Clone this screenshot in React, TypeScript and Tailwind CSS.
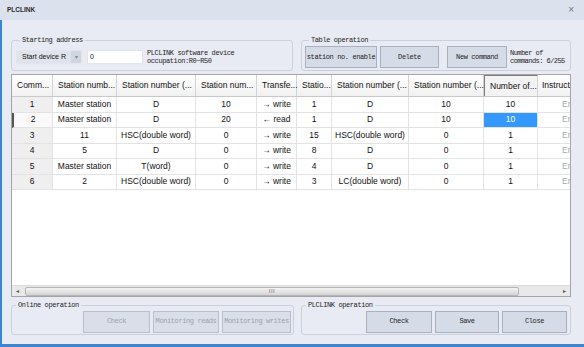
import React from "react";

const mono = { fontFamily: '"Liberation Mono", "DejaVu Sans Mono", monospace' };
const sans = { fontFamily: '"Liberation Sans", Arial, sans-serif' };

type Row = {
  no: string;
  st: string;
  dev: string;
  num: string;
  dir: string;
  st2: string;
  dev2: string;
  num2: string;
  count: string;
};

const rows: Row[] = [
  { no: "1", st: "Master station", dev: "D", num: "10", dir: "→ write", st2: "1", dev2: "D", num2: "10", count: "10" },
  { no: "2", st: "Master station", dev: "D", num: "20", dir: "← read", st2: "1", dev2: "D", num2: "10", count: "10" },
  { no: "3", st: "11", dev: "HSC(double word)", num: "0", dir: "→ write", st2: "15", dev2: "HSC(double word)", num2: "0", count: "1" },
  { no: "4", st: "5", dev: "D", num: "0", dir: "→ write", st2: "8", dev2: "D", num2: "0", count: "1" },
  { no: "5", st: "Master station", dev: "T(word)", num: "0", dir: "→ write", st2: "4", dev2: "D", num2: "0", count: "1" },
  { no: "6", st: "2", dev: "HSC(double word)", num: "0", dir: "→ write", st2: "3", dev2: "LC(double word)", num2: "0", count: "1" },
];

const headers = [
  { t: "Comm...", w: "w-[41px]" },
  { t: "Station numb...", w: "w-[64px]" },
  { t: "Station number (...", w: "w-[79px]" },
  { t: "Station num...", w: "w-[61px]" },
  { t: "Transfe...", w: "w-[40px]" },
  { t: "Statio...", w: "w-[35px]" },
  { t: "Station number (...", w: "w-[77px]" },
  { t: "Station number (...", w: "w-[75px]" },
];

function Btn({ label, w, disabled }: { label: string; w: string; disabled?: boolean }) {
  return (
    <button
      style={mono}
      className={`${w} h-[22px] shrink-0 border text-[7px] tracking-[-0.4px] ${
        disabled
          ? "border-[#b9c0cd] bg-[#d9dee8] text-[#9ca3ad]"
          : "border-[#a9b1c1] bg-[#d5dbe7] text-[#1e1e1e]"
      }`}
    >
      {label}
    </button>
  );
}

function Group({ title, className, children }: { title: string; className: string; children: React.ReactNode }) {
  return (
    <fieldset className={`border border-[#cbd0db] rounded-[3px] ${className}`}>
      <legend
        style={mono}
        className="ml-[4px] px-[2px] text-[7px] leading-[8px] tracking-[-0.4px] text-[#1e1e1e]"
      >
        {title}
      </legend>
      {children}
    </fieldset>
  );
}

function Cell({ w, children, className = "" }: { w: string; children?: React.ReactNode; className?: string }) {
  return (
    <div
      className={`${w} shrink-0 h-full flex items-center justify-center border-r border-b border-[#e3e3e3] ${className}`}
    >
      {children}
    </div>
  );
}

export default function App() {
  return (
    <div className="w-[584px] h-[347px] flex flex-col bg-[#e8ebf3] overflow-hidden" style={sans}>
      {/* title bar */}
      <div className="h-[20px] shrink-0 bg-[#dce2ed] flex items-center justify-between pl-[7px] pr-[10px]">
        <span className="text-[6.5px] font-bold text-[#2a2a2a]">PLCLINK</span>
        <span className="text-[10px] leading-none text-[#777]">×</span>
      </div>

      <div className="flex-1 flex flex-col border-l-2 border-b-[3px] border-[#3d86cf] pl-[9px] pr-[13px] pt-[16px]">
        {/* top groups */}
        <div className="flex gap-[8px]">
          <Group title="Starting address" className="w-[282px] h-[35px] flex items-center pl-[4px]">
            <div className="w-[66px] h-[14px] flex bg-[#dfe3ec] border border-[#e3e6ee]">
              <span className="flex-1 text-[7px] leading-[12px] pl-[5px] text-[#111]">Start device R</span>
              <span className="w-[10px] bg-[#d0d5df] text-[6px] leading-[12px] text-center text-[#888]">▾</span>
            </div>
            <div className="ml-[5px] w-[56px] h-[14px] bg-white border border-[#e1e4ec] text-[7px] leading-[12px] pl-[2px] text-[#111]">
              0
            </div>
            <div style={mono} className="ml-[4px] text-[7px] leading-[8px] tracking-[-0.4px] text-[#1e1e1e] -mt-[1px]">
              PLCLINK software device
              <br />
              occupation:R0~R50
            </div>
          </Group>
          <Group title="Table operation" className="w-[270px] h-[35px] flex items-center gap-[3px] pl-[3px]">
            <Btn label="station no. enable" w="w-[72px]" />
            <Btn label="Delete" w="w-[59px]" />
            <div className="w-[2px]" />
            <Btn label="New command" w="w-[60px]" />
            <div style={mono} className="text-[7px] leading-[8px] tracking-[-0.55px] text-[#1e1e1e] whitespace-nowrap">
              Number of
              <br />
              commands: 6/255
            </div>
          </Group>
        </div>

        {/* table */}
        <div className="mt-[3px] w-[560px] h-[223px] border border-[#a5a5a5] bg-white flex flex-col overflow-hidden text-[8.5px] text-[#111]">
          <div className="h-[22px] shrink-0 flex bg-gradient-to-b from-white to-[#f1f1f1] border-b border-[#c9c9c9]">
            {headers.map((h, i) => (
              <div
                key={i}
                className={`${h.w} shrink-0 flex items-center pl-[5px] border-r border-[#d3d3d3] whitespace-nowrap`}
              >
                {h.t}
              </div>
            ))}
            <div className="w-[54px] shrink-0 flex items-center pl-[5px] border-t border-l border-r border-t-[#7c7c7c] border-l-[#7c7c7c] border-r-[#d3d3d3] bg-[#f3f3f3] whitespace-nowrap">
              Number of...
            </div>
            <div className="w-[32px] shrink-0 flex items-center pl-[4px] whitespace-nowrap overflow-hidden">Instructi</div>
          </div>

          {rows.map((r, i) => (
            <div key={i} className="h-[15.5px] shrink-0 flex">
              <Cell
                w="w-[41px]"
                className={`border-[#d2d2d2] ${i === 1 ? "bg-[#fafafa] border-l-2 border-l-[#555]" : "bg-[#efefef]"}`}
              >
                {r.no}
              </Cell>
              <Cell w="w-[64px]">{r.st}</Cell>
              <Cell w="w-[79px]">{r.dev}</Cell>
              <Cell w="w-[61px]">{r.num}</Cell>
              <Cell w="w-[40px]" className="whitespace-nowrap">{r.dir}</Cell>
              <Cell w="w-[35px]">{r.st2}</Cell>
              <Cell w="w-[77px]">{r.dev2}</Cell>
              <Cell w="w-[75px]">{r.num2}</Cell>
              <Cell w="w-[54px]" className={i === 1 ? "bg-[#3399ff] text-white" : ""}>
                {r.count}
              </Cell>
              <div className="w-[32px] shrink-0 h-full flex items-center justify-end pr-[0px] overflow-hidden border-b border-[#e3e3e3] text-[#a8a8a8] whitespace-nowrap">
                <span className="w-[8px] overflow-hidden">En</span>
              </div>
            </div>
          ))}

          <div className="flex-1" />

          {/* horizontal scrollbar */}
          <div className="h-[11px] shrink-0 flex items-center bg-[#e9e9e9] border-t border-[#dcdcdc]">
            <div className="w-[11px] text-[6px] leading-none text-center text-[#555]">◂</div>
            <div className="ml-[2px] w-[494px] h-[9px] rounded-[2px] border border-[#b4b4b4] bg-gradient-to-b from-[#f3f3f3] to-[#d6d6d6] flex items-center justify-center">
              <span className="text-[6px] leading-none tracking-[0.5px] text-[#777]">III</span>
            </div>
            <div className="flex-1" />
            <div className="w-[11px] text-[6px] leading-none text-center text-[#555]">▸</div>
          </div>
        </div>

        {/* bottom groups */}
        <div className="mt-[4px] flex gap-[7px]">
          <Group title="Online operation" className="w-[283px] h-[34px] flex items-center justify-end gap-[3px] pr-[2px]">
            <Btn label="Check" w="w-[67px]" disabled />
            <Btn label="Monitoring reads" w="w-[66px]" disabled />
            <Btn label="Monitoring writes" w="w-[69px]" disabled />
          </Group>
          <Group title="PLCLINK operation" className="w-[270px] h-[34px] flex items-center justify-end gap-[3px] pr-[3px]">
            <Btn label="Check" w="w-[66px]" />
            <Btn label="Save" w="w-[64px]" />
            <Btn label="Close" w="w-[65px]" />
          </Group>
        </div>
      </div>
    </div>
  );
}
